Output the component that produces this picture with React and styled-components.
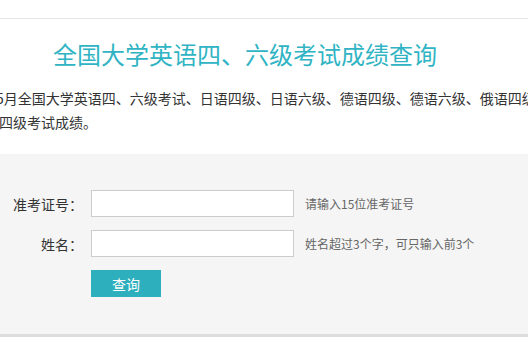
import React from "react";
import styled, { createGlobalStyle } from "styled-components";

const GlobalStyle = createGlobalStyle`
  body {
    margin: 0;
    background: #fff;
    overflow: hidden;
    font-family: "Microsoft YaHei", "Noto Sans CJK SC", sans-serif;
    color: #333;
  }
`;

function App() {
  return (
    <>
      <GlobalStyle />
      <StTopBar />
      <StIntro>
        <StTitle>全国大学英语四、六级考试成绩查询</StTitle>
        <StDesc>
          <StLine $indent={-4}>
            5月全国大学英语四、六级考试、日语四级、日语六级、德语四级、德语六级、俄语四级、俄语六级、法语
          </StLine>
          <StLine $indent={-1}>四级考试成绩。</StLine>
        </StDesc>
      </StIntro>
      <StPanel>
        <StForm onSubmit={(e) => e.preventDefault()}>
          <StRow>
            <StLabel>准考证号：</StLabel>
            <StInput type="text" name="zkzh" maxLength={15} />
            <StHint>请输入15位准考证号</StHint>
          </StRow>
          <StRow>
            <StLabel>姓名：</StLabel>
            <StInput type="text" name="xm" />
            <StHint>姓名超过3个字，可只输入前3个</StHint>
          </StRow>
          <StRow>
            <StLabel />
            <StButton type="submit">查询</StButton>
          </StRow>
        </StForm>
      </StPanel>
    </>
  );
}

export default App;

const StTopBar = styled.div`
  height: 18px;
  border-bottom: 1px solid #e6e6e6;
`;

const StIntro = styled.div`
  padding: 17px 0 20px;
`;

const StTitle = styled.h1`
  margin: 0 0 14px;
  padding-left: 53px;
  font-size: 24px;
  line-height: 36px;
  font-weight: normal;
  color: #30b4c4;
`;

const StDesc = styled.p`
  margin: 0;
  font-size: 14px;
  line-height: 24px;
  color: #333;
`;

const StLine = styled.span`
  display: block;
  white-space: nowrap;
  margin-left: ${(p) => p.$indent}px;
`;

const StPanel = styled.div`
  background: #f5f5f5;
  border-bottom: 3px solid #dddddd;
  padding: 36px 0 37px;
`;

const StForm = styled.form`
  display: flex;
  flex-direction: column;
  gap: 13px;
`;

const StRow = styled.div`
  display: flex;
  align-items: center;
`;

const StLabel = styled.label`
  width: 83px;
  margin-right: 8px;
  text-align: right;
  font-size: 14px;
  color: #333;
`;

const StInput = styled.input`
  box-sizing: border-box;
  width: 203px;
  height: 27px;
  border: 1px solid #cccccc;
  background: #fff;
  padding: 0 6px;
  outline: none;
`;

const StHint = styled.span`
  margin-left: 11px;
  font-size: 12px;
  color: #666;
`;

const StButton = styled.button`
  width: 70px;
  height: 27px;
  border: none;
  background: #2eafbd;
  color: #fff;
  font-family: inherit;
  font-size: 14px;
  cursor: pointer;
`;
